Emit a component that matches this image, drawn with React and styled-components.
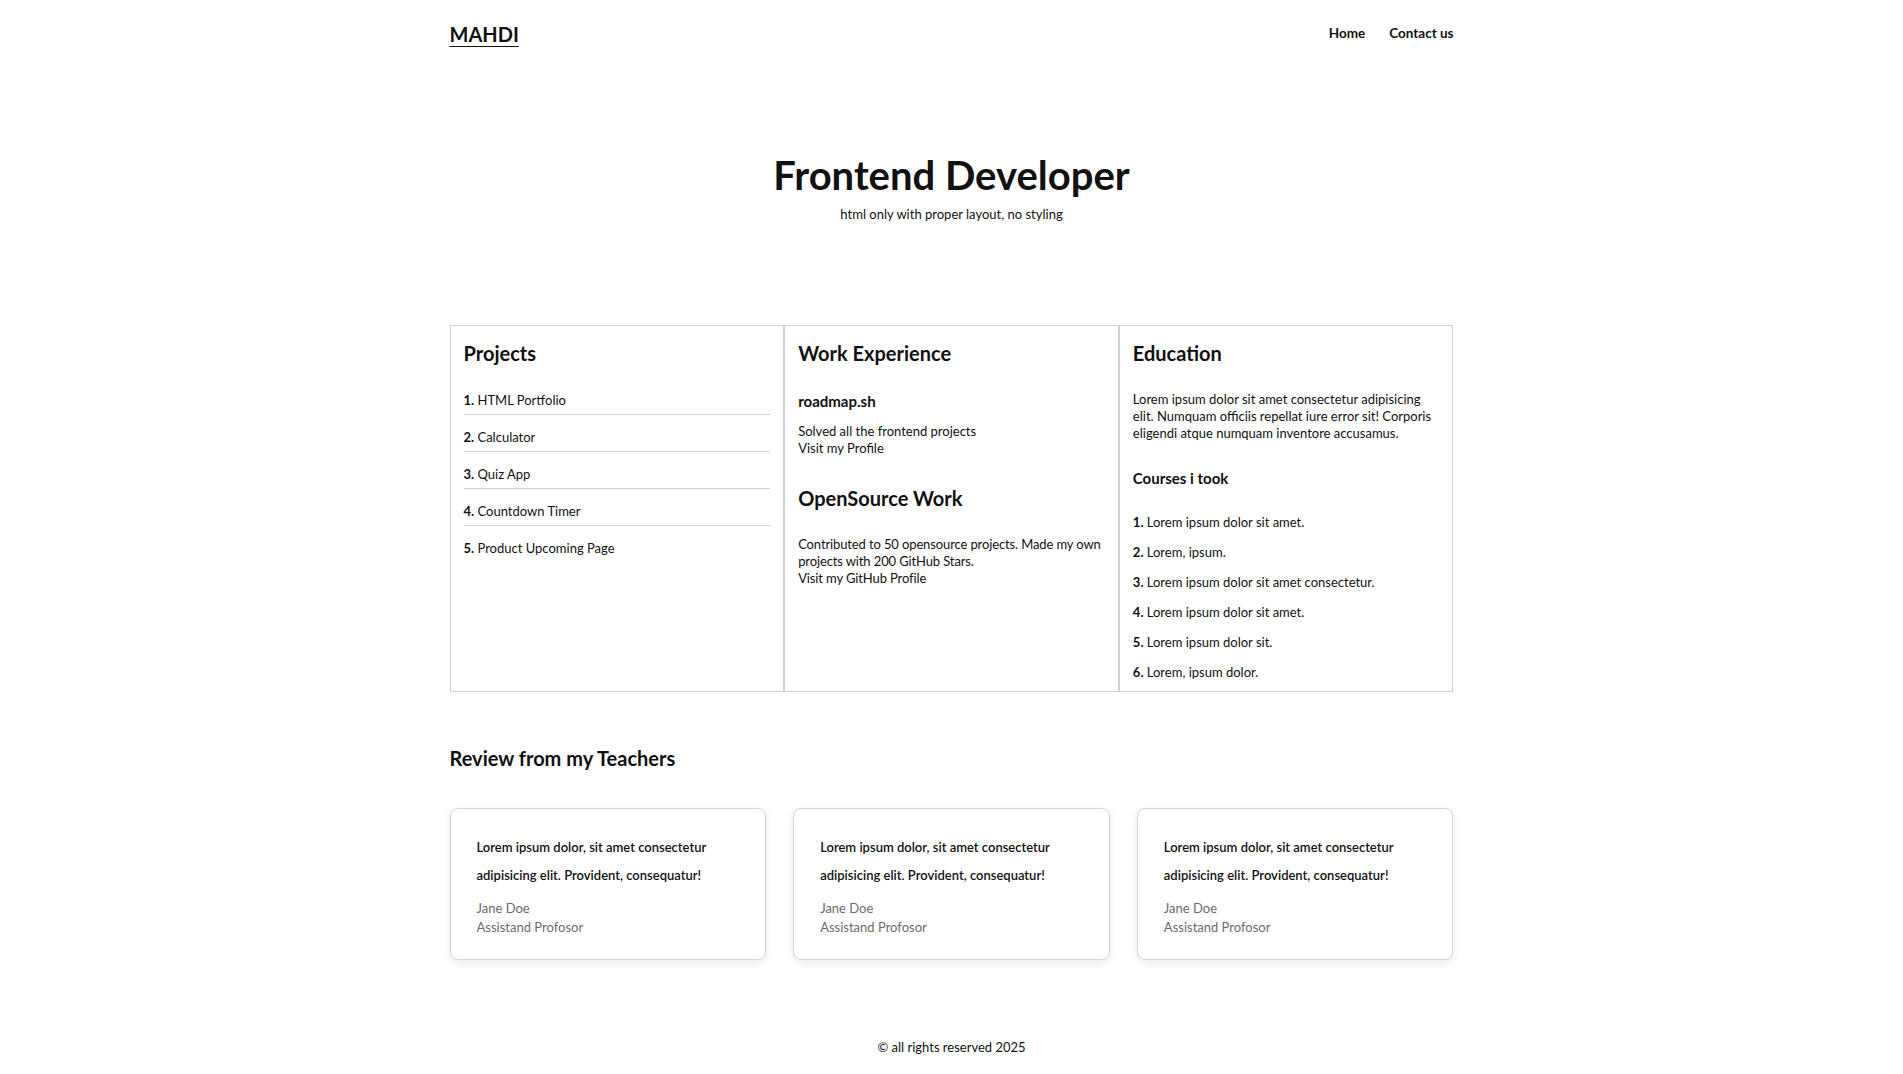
import React from "react";
import styled, { createGlobalStyle } from "styled-components";

const GlobalStyle = createGlobalStyle`
  html, body { margin: 0; padding: 0; background: #ffffff; }
  body {
    font-family: Lato, "Open Sans", "Noto Sans", sans-serif;
    color: #111111;
  }
  * { box-sizing: border-box; }
`;

const Page = styled.div`
  width: 1004px;
  margin: 0 auto;
`;

const Header = styled.header`
  display: flex;
  justify-content: space-between;
  align-items: flex-start;
  padding-top: 20px;
`;

const Logo = styled.a`
  font-size: 20px;
  font-weight: 700;
  line-height: 28px;
  color: #111111;
  text-decoration: underline;
  text-underline-offset: 4px;
  text-decoration-thickness: 1px;
`;

const Nav = styled.nav`
  display: flex;
  gap: 24px;
  padding-top: 3px;
`;

const NavLink = styled.a`
  font-size: 13.5px;
  font-weight: 700;
  line-height: 20px;
  color: #111111;
  text-decoration: none;
`;

const Hero = styled.section`
  text-align: center;
  padding-top: 103px;
`;

const Title = styled.h1`
  margin: 0;
  font-size: 40px;
  line-height: 48px;
  font-weight: 700;
`;

const Subtitle = styled.p`
  margin: 6px 0 0;
  font-size: 13px;
  line-height: 18px;
`;

const Columns = styled.section`
  display: grid;
  grid-template-columns: repeat(3, 1fr);
  margin-top: 102px;
`;

const Column = styled.div`
  border: 1px solid #d0d0d0;
  padding: 14px 13px 10px;
`;

const SectionTitle = styled.h2`
  margin: 0 0 ${(p) => p.$mb ?? 25}px;
  font-size: 20px;
  line-height: 26px;
  font-weight: 700;
`;

const SubTitle = styled.h3`
  margin: 0 0 ${(p) => p.$mb ?? 12}px;
  font-size: 15px;
  line-height: 20px;
  font-weight: 700;
`;

const Text = styled.p`
  margin: 0 0 ${(p) => p.$mb ?? 0}px;
  font-size: 13px;
  line-height: 17px;
  letter-spacing: ${(p) => (p.$tight ? "-0.12px" : "normal")};
`;

const List = styled.ol`
  list-style: none;
  margin: 0;
  padding: 0;
`;

const ProjectItem = styled.li`
  font-size: 13px;
  line-height: 18px;
  padding-bottom: 5px;
  margin-bottom: 13px;
  border-bottom: 1px solid #d0d0d0;
  &:last-child {
    border-bottom: none;
    margin-bottom: 0;
  }
`;

const CourseItem = styled.li`
  font-size: 13px;
  line-height: 18px;
  margin-bottom: 12px;
  &:last-child { margin-bottom: 0; }
`;

const Num = styled.b`
  font-weight: 700;
`;

const Reviews = styled.section`
  margin-top: 53px;
`;

const ReviewsTitle = styled.h2`
  margin: 0 0 37px;
  font-size: 20px;
  line-height: 26px;
  font-weight: 700;
`;

const Cards = styled.div`
  display: grid;
  grid-template-columns: repeat(3, 1fr);
  gap: 27px;
`;

const Card = styled.div`
  border: 1px solid #d4d4d4;
  border-radius: 8px;
  box-shadow: 0 3px 10px rgba(0, 0, 0, 0.08);
  padding: 24px 26px 22px;
  background: #fff;
`;

const Quote = styled.p`
  margin: 0 0 10px;
  font-size: 13px;
  line-height: 28px;
  font-weight: 600;
`;

const Meta = styled.div`
  font-size: 13px;
  line-height: 19px;
  color: #6b6b6b;
`;

const Footer = styled.footer`
  margin-top: 78px;
  padding-bottom: 20px;
  text-align: center;
  font-size: 13px;
  line-height: 18px;
`;

const projects = [
  "HTML Portfolio",
  "Calculator",
  "Quiz App",
  "Countdown Timer",
  "Product Upcoming Page",
];

const courses = [
  "Lorem ipsum dolor sit amet.",
  "Lorem, ipsum.",
  "Lorem ipsum dolor sit amet consectetur.",
  "Lorem ipsum dolor sit amet.",
  "Lorem ipsum dolor sit.",
  "Lorem, ipsum dolor.",
];

export default function App() {
  return (
    <>
      <GlobalStyle />
      <Page>
        <Header>
          <Logo href="#">MAHDI</Logo>
          <Nav>
            <NavLink href="#">Home</NavLink>
            <NavLink href="#">Contact us</NavLink>
          </Nav>
        </Header>

        <Hero>
          <Title>Frontend Developer</Title>
          <Subtitle>html only with proper layout, no styling</Subtitle>
        </Hero>

        <Columns>
          <Column>
            <SectionTitle>Projects</SectionTitle>
            <List>
              {projects.map((p, i) => (
                <ProjectItem key={p}>
                  <Num>{i + 1}.</Num> {p}
                </ProjectItem>
              ))}
            </List>
          </Column>

          <Column>
            <SectionTitle>Work Experience</SectionTitle>
            <SubTitle>roadmap.sh</SubTitle>
            <Text $mb={28}>
              Solved all the frontend projects
              <br />
              Visit my Profile
            </Text>
            <SectionTitle>OpenSource Work</SectionTitle>
            <Text $tight>
              Contributed to 50 opensource projects. Made my own projects with
              200 GitHub Stars.
              <br />
              Visit my GitHub Profile
            </Text>
          </Column>

          <Column>
            <SectionTitle>Education</SectionTitle>
            <Text $mb={26}>
              Lorem ipsum dolor sit amet consectetur adipisicing elit. Numquam
              officiis repellat iure error sit! Corporis eligendi atque numquam
              inventore accusamus.
            </Text>
            <SubTitle $mb={25}>Courses i took</SubTitle>
            <List>
              {courses.map((c, i) => (
                <CourseItem key={i}>
                  <Num>{i + 1}.</Num> {c}
                </CourseItem>
              ))}
            </List>
          </Column>
        </Columns>

        <Reviews>
          <ReviewsTitle>Review from my Teachers</ReviewsTitle>
          <Cards>
            {[0, 1, 2].map((k) => (
              <Card key={k}>
                <Quote>
                  Lorem ipsum dolor, sit amet consectetur adipisicing elit.
                  Provident, consequatur!
                </Quote>
                <Meta>
                  Jane Doe
                  <br />
                  Assistand Profosor
                </Meta>
              </Card>
            ))}
          </Cards>
        </Reviews>

        <Footer>© all rights reserved 2025</Footer>
      </Page>
    </>
  );
}
